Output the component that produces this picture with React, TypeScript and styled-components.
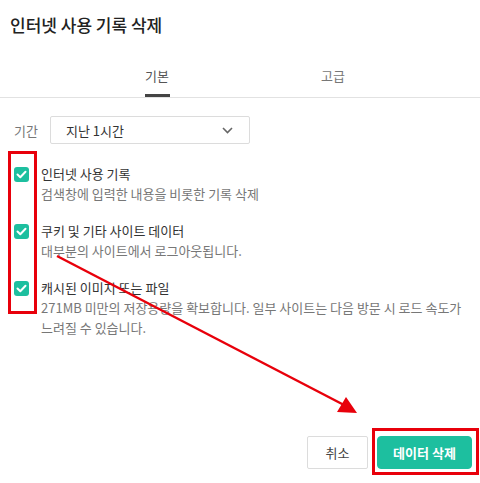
import React from "react";
import styled, { createGlobalStyle } from "styled-components";

const Global = createGlobalStyle`
	html, body {
		margin: 0;
		padding: 0;
		background: #fff;
	}
	body {
		font-family: "Noto Sans CJK KR", "Noto Sans", "Liberation Sans", sans-serif;
		color: #333;
	}
`;

const Dialog = styled.div`
	position: relative;
	width: 480px;
	height: 483px;
	display: flex;
	flex-direction: column;
	box-sizing: border-box;
	overflow: hidden;
`;

const Title = styled.h1`
	margin: 0;
	padding: 13px 0 0 10px;
	font-size: 17px;
	font-weight: 500;
	line-height: 24px;
	color: #222;
`;

const TabBar = styled.div`
	display: flex;
	margin-top: 29px;
	padding: 0 59px 0 69px;
	border-bottom: 1px solid #e2e2e2;
`;

const Tab = styled.div<{ $active?: boolean }>`
	flex: 1;
	display: flex;
	flex-direction: column;
	align-items: center;
	font-size: 13px;
	line-height: 20px;
	color: ${(p) => (p.$active ? "#555" : "#777")};

	&::after {
		content: "";
		display: block;
		width: 25px;
		height: 3px;
		margin-top: 8px;
		background: ${(p) => (p.$active ? "#444" : "transparent")};
	}
`;

const PeriodRow = styled.div`
	display: flex;
	align-items: center;
	gap: 12px;
	margin-top: 18px;
	padding-left: 14px;
`;

const Label = styled.span`
	font-size: 13px;
	color: #777;
`;

const Select = styled.div`
	width: 200px;
	height: 28px;
	box-sizing: border-box;
	border: 1px solid #dcdcdc;
	border-radius: 2px;
	display: flex;
	align-items: center;
	justify-content: space-between;
	padding: 0 16px 0 15px;
	font-size: 13px;
	color: #333;
`;

const List = styled.div`
	display: flex;
	flex-direction: column;
	gap: 17px;
	margin-top: 20px;
	padding-left: 14px;
`;

const Item = styled.div`
	display: flex;
	gap: 12px;
	align-items: flex-start;
`;

const Check = styled.span`
	flex: none;
	width: 15px;
	height: 15px;
	margin-top: 3px;
	border-radius: 3px;
	background: #1dbf9f;
	display: flex;
	align-items: center;
	justify-content: center;
`;

const Texts = styled.div`
	display: flex;
	flex-direction: column;
	font-size: 13px;
	line-height: 20px;
	padding-right: 14px;
`;

const ItemTitle = styled.div`
	color: #333;
`;

const ItemDesc = styled.div`
	color: #777;
`;

const Footer = styled.div`
	margin-top: auto;
	display: flex;
	justify-content: flex-end;
	gap: 9px;
	padding: 0 8px 14px 0;
`;

const Button = styled.button<{ $primary?: boolean }>`
	height: 33px;
	width: ${(p) => (p.$primary ? "95px" : "61px")};
	padding: 0;
	border-radius: ${(p) => (p.$primary ? "4px" : "2px")};
	border: 1px solid ${(p) => (p.$primary ? "#1dbf9f" : "#dcdcdc")};
	background: ${(p) => (p.$primary ? "#1dbf9f" : "#fff")};
	color: ${(p) => (p.$primary ? "#fff" : "#444")};
	font-family: inherit;
	font-size: 13px;
	font-weight: ${(p) => (p.$primary ? 700 : 400)};
	cursor: pointer;
`;

const Mark = styled.div<{ $x: number; $y: number; $w: number; $h: number }>`
	position: absolute;
	left: ${(p) => p.$x}px;
	top: ${(p) => p.$y}px;
	width: ${(p) => p.$w}px;
	height: ${(p) => p.$h}px;
	box-sizing: border-box;
	border: 3px solid #e8000b;
	pointer-events: none;
`;

const Arrow = styled.svg`
	position: absolute;
	left: 0;
	top: 0;
	pointer-events: none;
`;

const Tick = () => (
	<svg width="11" height="9" viewBox="0 0 11 9">
		<path d="M1.5 4.5 L4.3 7.2 L9.5 1.8" fill="none" stroke="#fff" strokeWidth="2" strokeLinecap="round" strokeLinejoin="round" />
	</svg>
);

const Chevron = () => (
	<svg width="11" height="7" viewBox="0 0 11 7">
		<path d="M1 1 L5.5 5.5 L10 1" fill="none" stroke="#666" strokeWidth="1.6" />
	</svg>
);

const items = [
	{ title: "인터넷 사용 기록", desc: "검색창에 입력한 내용을 비롯한 기록 삭제" },
	{ title: "쿠키 및 기타 사이트 데이터", desc: "대부분의 사이트에서 로그아웃됩니다." },
	{
		title: "캐시된 이미지 또는 파일",
		desc: "271MB 미만의 저장용량을 확보합니다. 일부 사이트는 다음 방문 시 로드 속도가 느려질 수 있습니다.",
	},
];

const App = () => {
	return (
		<Dialog>
			<Global />
			<Title>인터넷 사용 기록 삭제</Title>
			<TabBar>
				<Tab $active>기본</Tab>
				<Tab>고급</Tab>
			</TabBar>
			<PeriodRow>
				<Label>기간</Label>
				<Select>
					<span>지난 1시간</span>
					<Chevron />
				</Select>
			</PeriodRow>
			<List>
				{items.map((it) => (
					<Item key={it.title}>
						<Check>
							<Tick />
						</Check>
						<Texts>
							<ItemTitle>{it.title}</ItemTitle>
							<ItemDesc>{it.desc}</ItemDesc>
						</Texts>
					</Item>
				))}
			</List>
			<Footer>
				<Button>취소</Button>
				<Button $primary>데이터 삭제</Button>
			</Footer>

			<Mark $x={8} $y={151} $w={29} $h={163} />
			<Mark $x={372} $y={428} $w={107} $h={47} />
			<Arrow width="480" height="483">
				<line x1="57" y1="256" x2="344" y2="405" stroke="#e8000b" strokeWidth="2.5" />
				<polygon points="357,413 337,412 346,397" fill="#e8000b" />
			</Arrow>
		</Dialog>
	);
};

export default App;
